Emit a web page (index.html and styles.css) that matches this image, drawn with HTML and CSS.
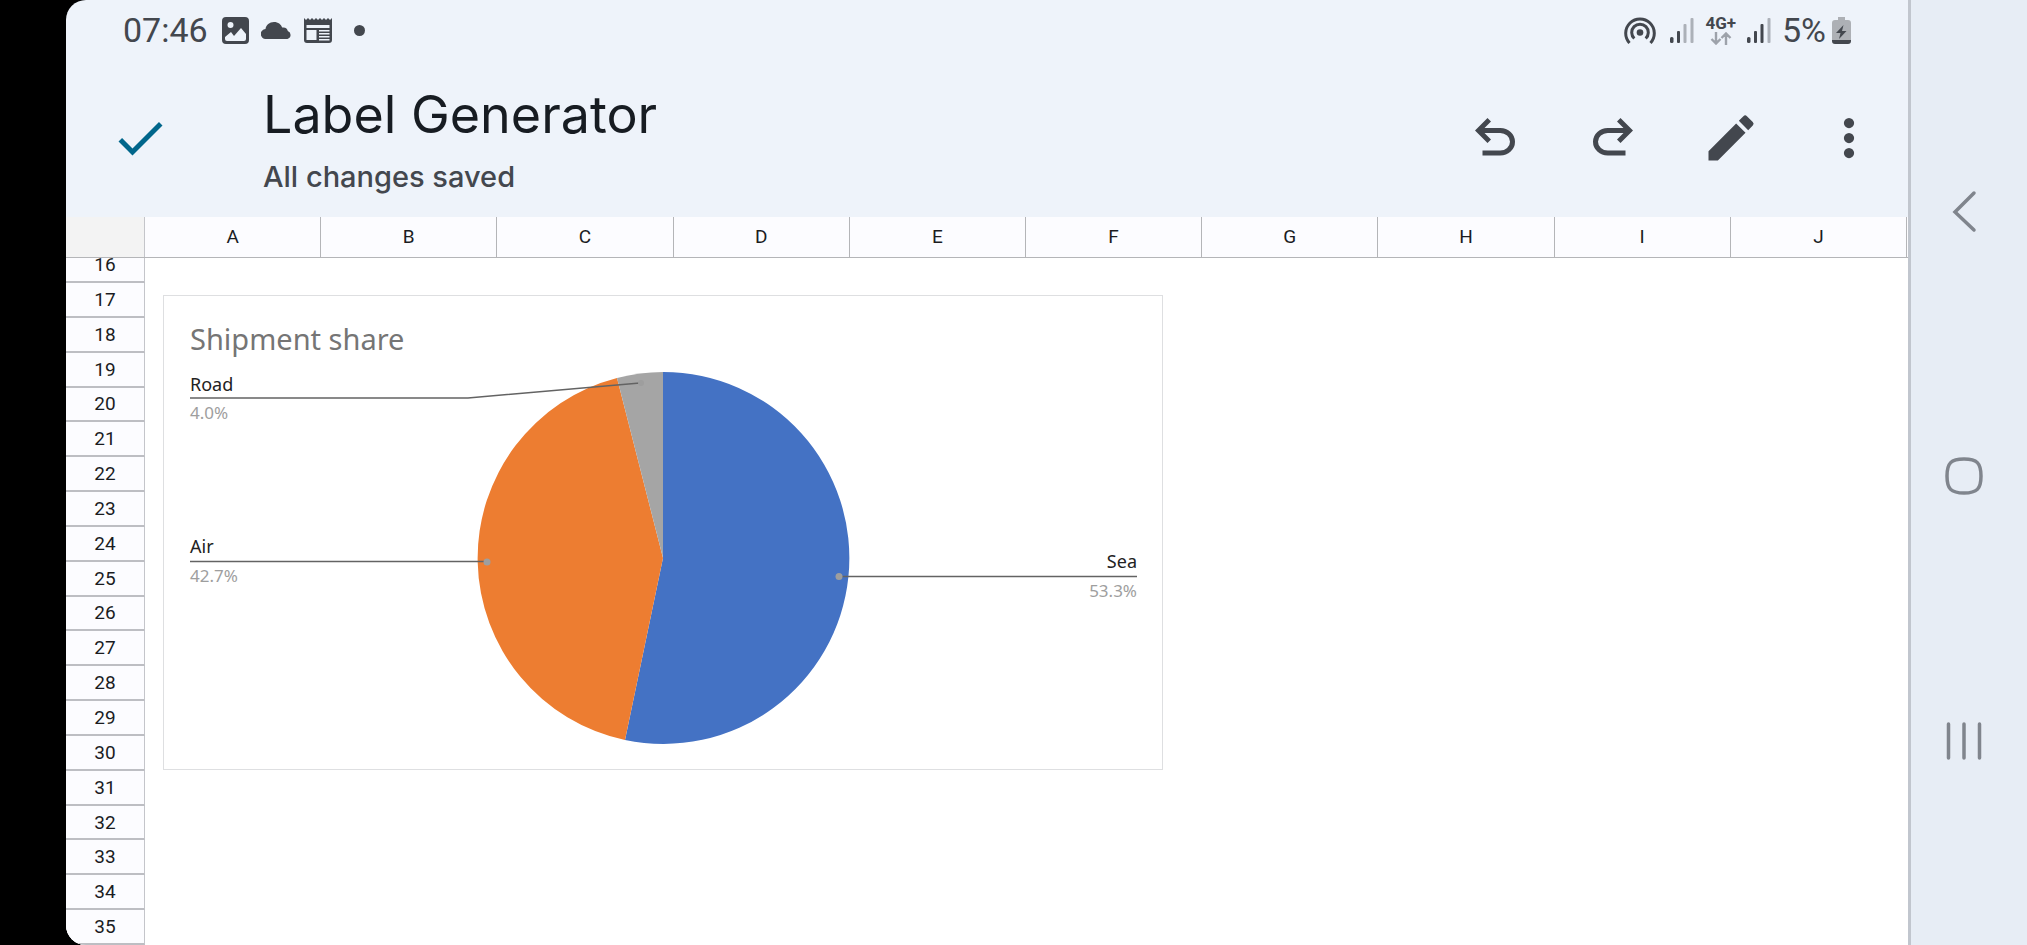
FILE: index.html
```html
<!DOCTYPE html>
<html lang="en">
<head>
<meta charset="utf-8">
<title>Label Generator</title>
<link rel="stylesheet" href="styles.css">
</head>
<body>
<div class="device">
  <div class="screen">
    <div class="status">
      <div class="status-left">
        <time class="clock">07:46</time>
        <svg class="ic-image" viewBox="0 0 27 27"><path fill-rule="evenodd" d="M4 0h19a4 4 0 0 1 4 4v19a4 4 0 0 1-4 4H4a4 4 0 0 1-4-4V4a4 4 0 0 1 4-4zM3 20v2a2 2 0 0 0 2 2h17a2 2 0 0 0 2-2v-5l-5-6-7 8-3-4zM8.500 5a3 3 0 1 0 0 6 3 3 0 0 0 0-6z"/></svg>
        <svg class="ic-cloud" viewBox="0 0 31 17"><path d="M5 17a5 5 0 0 1-.5-10C5 3 8.500 0 13 0c4.200 0 7 2.300 8.200 5.600 3.300-.6 5.300 1.400 5.600 3.400A4.200 4.200 0 0 1 26.500 17z"/></svg>
        <svg class="ic-news" viewBox="0 0 28 25"><path fill-rule="evenodd" d="M0 0l2 2 2-2 2 2 2-2 2 2 2-2 2 2 2-2 2 2 2-2 2 2 2-2 2 2 2-2v22a3 3 0 0 1-3 3H3a3 3 0 0 1-3-3zM2.500 7v3h23V7zM2.500 12v10h10V12zM15 12v1.500h10.500V12zM15 15v1.500h10.500V15zM15 18v1.500h10.500V18zM15 21v1.500h10.500V21z"/></svg>
        <span class="more-dot"></span>
      </div>
      <div class="status-right">
        <svg class="ic-hotspot" viewBox="0 0 32 28"><g fill="none" stroke="currentColor" stroke-width="3"><path d="M5.500 27A14.300 14.300 0 1 1 26.500 27"/><path d="M10.300 22.500A8.300 8.300 0 1 1 21.700 22.500"/></g><circle cx="16" cy="16.500" r="3.300"/></svg>
        <svg class="ic-signal" viewBox="0 0 24 25"><rect y="19" width="3.500" height="6" rx="1.500"/><rect x="7" y="13" width="3" height="12" rx="1"/><g opacity=".38"><rect x="13.500" y="6" width="3" height="19" rx="1"/><rect x="20.500" width="3" height="25" rx="1"/></g></svg>
        <span class="network">
          <span class="network-type">4G+</span>
          <svg class="ic-data" viewBox="0 0 22 13"><path d="M6 0v11M1.500 7L6 11.500 10.500 7M16 13V2M11.500 6L16 1.500 20.500 6" fill="none" stroke="#9da2aa" stroke-width="2.400"/></svg>
        </span>
        <svg class="ic-signal" viewBox="0 0 24 25"><rect y="19" width="3.500" height="6" rx="1.500"/><rect x="7" y="13" width="3" height="12" rx="1"/><rect x="13.500" y="6" width="3" height="19" rx="1"/><rect x="20.500" width="3" height="25" rx="1" opacity=".38"/></svg>
        <span class="battery">
          <span class="clock">5%</span>
          <svg class="ic-battery" viewBox="0 0 19 27"><path fill="#adb0b5" d="M6 0h7v3h3a3 3 0 0 1 3 3v17H0V6a3 3 0 0 1 3-3h3z"/><path d="M0 23h19v1a3 3 0 0 1-3 3H3a3 3 0 0 1-3-3zM11.500 8L4 16h4.500L7 22l7.500-8H10z"/></svg>
        </span>
      </div>
    </div>

    <header class="appbar">
      <button class="icon-btn done" aria-label="Done"><svg viewBox="0 0 24 24"><path d="M9 16.170L4.830 12l-1.420 1.410L9 19 21 7l-1.410-1.410z"/></svg></button>
      <div class="heading">
        <h1 class="title">Label Generator</h1>
        <p class="subtitle">All changes saved</p>
      </div>
      <div class="actions">
        <button class="icon-btn" aria-label="Undo"><svg viewBox="0 -960 960 960"><path d="M280-200v-80h284q63 0 109.500-40T720-420q0-60-46.500-100T564-560H312l104 104-56 56-200-200 200-200 56 56-104 104h252q97 0 166.500 63T800-420q0 94-69.500 157T564-200H280Z"/></svg></button>
        <button class="icon-btn" aria-label="Redo"><svg viewBox="0 -960 960 960"><path d="M396-200q-97 0-166.500-63T160-420q0-94 69.500-157T396-640h252L544-744l56-56 200 200-200 200-56-56 104-104H396q-63 0-109.500 40T240-420q0 60 46.500 100T396-280h284v80H396Z"/></svg></button>
        <button class="icon-btn" aria-label="Edit"><svg viewBox="0 0 24 24"><path d="M3 17.250V21h3.750L17.810 9.940l-3.750-3.750zM20.710 7.040a1 1 0 0 0 0-1.410l-2.340-2.340a1 1 0 0 0-1.410 0l-1.830 1.830 3.750 3.750z"/></svg></button>
        <button class="icon-btn" aria-label="More options"><svg viewBox="0 0 24 24"><circle cx="12" cy="6" r="2.050"/><circle cx="12" cy="12" r="2.050"/><circle cx="12" cy="18" r="2.050"/></svg></button>
      </div>
    </header>

    <main class="sheet">
      <table class="grid">
        <thead>
          <tr class="cols">
            <td class="corner"></td>
            <th scope="col">A</th><th scope="col">B</th><th scope="col">C</th><th scope="col">D</th><th scope="col">E</th><th scope="col">F</th><th scope="col">G</th><th scope="col">H</th><th scope="col">I</th><th scope="col">J</th>
          </tr>
        </thead>
        <tbody>
          <tr><th scope="row">16</th></tr>
          <tr><th scope="row">17</th></tr>
          <tr><th scope="row">18</th></tr>
          <tr><th scope="row">19</th></tr>
          <tr><th scope="row">20</th></tr>
          <tr><th scope="row">21</th></tr>
          <tr><th scope="row">22</th></tr>
          <tr><th scope="row">23</th></tr>
          <tr><th scope="row">24</th></tr>
          <tr><th scope="row">25</th></tr>
          <tr><th scope="row">26</th></tr>
          <tr><th scope="row">27</th></tr>
          <tr><th scope="row">28</th></tr>
          <tr><th scope="row">29</th></tr>
          <tr><th scope="row">30</th></tr>
          <tr><th scope="row">31</th></tr>
          <tr><th scope="row">32</th></tr>
          <tr><th scope="row">33</th></tr>
          <tr><th scope="row">34</th></tr>
          <tr><th scope="row">35</th></tr>
        </tbody>
      </table>

      <figure class="chart">
        <svg viewBox="0 0 998 473" role="img" aria-label="Shipment share pie chart">
          <path fill="#4472c4" d="M499 262V76A186 186 0 1 1 461 444Z"/>
          <path fill="#ed7d31" d="M499 262L461 444A186 186 0 0 1 453 82Z"/>
          <path fill="#a5a5a5" d="M499 262L453 82A186 186 0 0 1 499 76Z"/>
          <g class="leader">
            <path d="M26 102H304L476 87"/>
            <path d="M26 265.500H323"/>
            <path d="M675 280.500H973"/>
          </g>
          <g fill="#9e9e9e">
            <circle cx="477" cy="87" r="3"/>
            <circle cx="323" cy="266" r="3.500"/>
            <circle cx="675" cy="280.500" r="3.500"/>
          </g>
          <text class="chart-title" x="26" y="54">Shipment share</text>
          <text class="name" x="26" y="95">Road</text>
          <text class="value" x="26" y="123">4.0%</text>
          <text class="name" x="26" y="257">Air</text>
          <text class="value" x="26" y="286">42.7%</text>
          <text class="name end" x="973" y="272">Sea</text>
          <text class="value end" x="973" y="301">53.3%</text>
        </svg>
      </figure>
    </main>
  </div>

  <nav class="navbar" aria-label="System navigation">
    <button class="nav-btn" aria-label="Back"><svg viewBox="0 0 48 48"><path d="M34 6L15 25l19 18"/></svg></button>
    <button class="nav-btn" aria-label="Home"><svg viewBox="0 0 48 48"><path d="M24 7c13 0 17 4 17 17s-4 17-17 17S7 37 7 24 11 7 24 7z"/></svg></button>
    <button class="nav-btn" aria-label="Recent apps"><svg viewBox="0 0 48 48"><path d="M8.500 7v34M24 7v34M39.500 7v34"/></svg></button>
  </nav>
</div>
</body>
</html>
```

FILE: styles.css
```css
* {
  box-sizing: border-box;
}

body {
  margin: 0;
  background: #000;
  color: #1b1c1f;
  font-family: Roboto, "Liberation Sans", sans-serif;
}

svg {
  display: block;
  fill: currentColor;
}

button {
  padding: 0;
  border: 0;
  background: none;
  color: inherit;
}

.device {
  display: flex;
  height: 100vh;
  padding-left: 66px;
}

.screen {
  flex: 1;
  min-width: 0;
  display: flex;
  flex-direction: column;
  overflow: hidden;
  border-radius: 20px 0 0 20px;
  background: #eef3fa;
}

/* Status bar */
.status {
  display: flex;
  justify-content: space-between;
  align-items: center;
  height: 60px;
  padding: 0 57px 0 57px;
  color: #43474e;
}

.status-left,
.status-right,
.battery {
  display: flex;
  align-items: center;
}

.status-left {
  gap: 12px;
}

.status-right {
  gap: 11px;
}

.battery {
  gap: 6px;
}

.clock {
  font-size: 34px;
  line-height: 40px;
}

.status-left .clock {
  margin-right: 2px;
}

.ic-image { width: 27px; height: 27px; }
.ic-cloud { width: 31px; height: 17px; }
.ic-news { width: 28px; height: 25px; }
.ic-hotspot { width: 32px; height: 28px; margin-right: 3px; }
.ic-signal { width: 24px; height: 25px; }
.ic-data { width: 22px; height: 13px; }
.ic-battery { width: 19px; height: 27px; }

.more-dot {
  width: 11px;
  height: 11px;
  margin-left: 10px;
  border-radius: 50%;
  background: currentColor;
}

.network {
  display: flex;
  flex-direction: column;
  align-items: center;
  gap: 2px;
}

.network-type {
  font-size: 17px;
  font-weight: 700;
  line-height: 14px;
}

/* App bar */
.appbar {
  display: flex;
  align-items: center;
  height: 157px;
  padding: 0 29px 2px 44px;
  color: #43474e;
}

.icon-btn {
  width: 60px;
  height: 60px;
}

.icon-btn svg {
  width: 60px;
  height: 60px;
}

.done {
  color: #00668b;
}

.heading {
  flex: 1;
  margin-left: 93px;
  padding-top: 4px;
  font-family: Inter, sans-serif;
}

.title {
  margin: 0 0 10px;
  color: #171c22;
  font-size: 52px;
  font-weight: 400;
  line-height: 64px;
}

.subtitle {
  margin: 0;
  font-size: 29px;
  font-weight: 500;
  line-height: 40px;
}

.actions {
  display: flex;
  gap: 58px;
}

/* Spreadsheet */
.sheet {
  position: relative;
  flex: 1;
  min-height: 0;
  background: #fff;
}

.grid {
  display: flex;
  flex-direction: column;
  height: 100%;
  font-size: 19px;
  line-height: 24px;
}

.grid th {
  display: flex;
  align-items: center;
  justify-content: center;
  padding: 0;
  background: #fcfcff;
  font-weight: 400;
}

.cols {
  display: grid;
  grid-template-columns: 79px repeat(10, 1fr);
  height: 41px;
  padding-right: 1px;
  border-bottom: 1px solid #b4b5b8;
  background: #fcfcff;
}

.cols th {
  border-right: 1px solid #b4b5b8;
}

.corner {
  padding: 0;
  border-right: 1px solid #c4c5ca;
  background: #f3f3f3;
}

.grid tbody {
  flex: 1;
  display: grid;
  grid-template-rows: 25px repeat(19, 1fr);
  min-height: 0;
}

.grid tbody tr {
  display: flex;
  min-height: 0;
}

.grid tbody th {
  width: 79px;
  padding-top: 1px;
  border-right: 1px solid #c4c5ca;
  border-bottom: 2px solid #bdbec3;
}

.grid tbody tr:first-child th {
  padding-bottom: 7px;
  align-items: flex-end;
  line-height: 18px;
}

.chart {
  position: absolute;
  top: 78px;
  left: 97px;
  width: calc(100% - 97px);
  max-width: 1000px;
  margin: 0;
  border: 1px solid #dedfe1;
  background: #fff;
}

.chart svg {
  width: 100%;
}

.chart text {
  font-family: "Noto Sans", "Open Sans", sans-serif;
}

.chart .chart-title {
  fill: #757575;
  font-size: 29px;
}

.name {
  fill: #222;
  font-size: 18px;
}

.value {
  fill: #9e9e9e;
  font-size: 17px;
}

.end {
  text-anchor: end;
}

.leader {
  fill: none;
  stroke: #636363;
  stroke-width: 1.5;
}

/* System navigation */
.navbar {
  display: flex;
  flex-direction: column;
  align-items: center;
  justify-content: center;
  gap: 217px;
  width: 119px;
  padding: 7px 10px 0 0;
  border-left: 3px solid #c1c6ce;
  background: #e7edf5;
  color: #80858d;
}

.nav-btn,
.nav-btn svg {
  width: 48px;
  height: 48px;
}

.nav-btn svg {
  fill: none;
  stroke: currentColor;
  stroke-width: 3.5;
  stroke-linecap: round;
}
```
